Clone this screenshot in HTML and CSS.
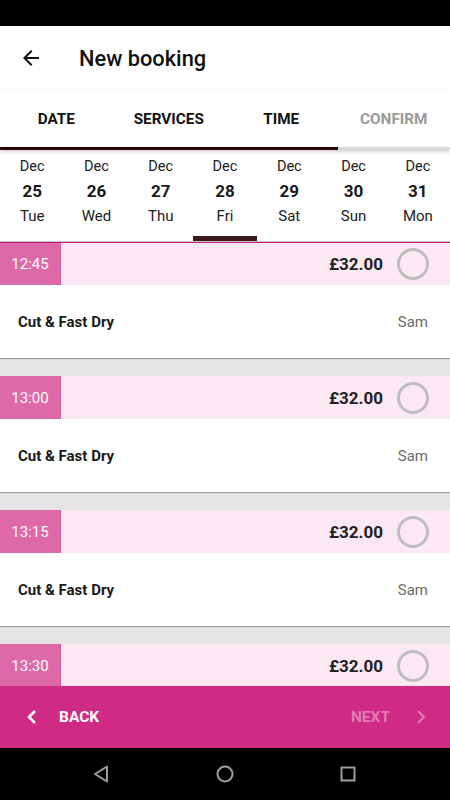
FILE: index.html
```html
<!DOCTYPE html>
<html lang="en">
<head>
    <meta charset="UTF-8">
    <meta name="viewport" content="width=device-width, initial-scale=1.0">
    <title>New booking</title>
    <link rel="stylesheet" href="styles.css">
</head>
<body>
    <div class="phone">
        <div class="status-bar"></div>

        <header class="app-bar">
            <svg class="back-icon" width="24" height="24" viewBox="0 0 24 24"><path d="M20 11H7.83l5.59-5.59L12 4l-8 8 8 8 1.41-1.41L7.83 13H20v-2z" fill="#111"/></svg>
            <h1>New booking</h1>
        </header>

        <nav class="steps">
            <div class="step">DATE</div>
            <div class="step">SERVICES</div>
            <div class="step">TIME</div>
            <div class="step step-off">CONFIRM</div>
            <div class="progress"><div class="progress-fill"></div></div>
        </nav>

        <div class="days">
            <div class="day"><span>Dec</span><strong>25</strong><span>Tue</span></div>
            <div class="day"><span>Dec</span><strong>26</strong><span>Wed</span></div>
            <div class="day"><span>Dec</span><strong>27</strong><span>Thu</span></div>
            <div class="day day-on"><span>Dec</span><strong>28</strong><span>Fri</span></div>
            <div class="day"><span>Dec</span><strong>29</strong><span>Sat</span></div>
            <div class="day"><span>Dec</span><strong>30</strong><span>Sun</span></div>
            <div class="day"><span>Dec</span><strong>31</strong><span>Mon</span></div>
        </div>

        <main class="slots">
            <div class="slot slot-first">
                <div class="slot-head">
                    <div class="slot-time">12:45</div>
                    <div class="slot-price">£32.00</div>
                    <div class="radio"></div>
                </div>
                <div class="slot-body"><strong>Cut &amp; Fast Dry</strong><span>Sam</span></div>
            </div>
            <div class="slot">
                <div class="slot-head">
                    <div class="slot-time">13:00</div>
                    <div class="slot-price">£32.00</div>
                    <div class="radio"></div>
                </div>
                <div class="slot-body"><strong>Cut &amp; Fast Dry</strong><span>Sam</span></div>
            </div>
            <div class="slot">
                <div class="slot-head">
                    <div class="slot-time">13:15</div>
                    <div class="slot-price">£32.00</div>
                    <div class="radio"></div>
                </div>
                <div class="slot-body"><strong>Cut &amp; Fast Dry</strong><span>Sam</span></div>
            </div>
            <div class="slot">
                <div class="slot-head">
                    <div class="slot-time">13:30</div>
                    <div class="slot-price">£32.00</div>
                    <div class="radio"></div>
                </div>
                <div class="slot-body"><strong>Cut &amp; Fast Dry</strong><span>Sam</span></div>
            </div>
        </main>

        <footer class="actions">
            <div class="action">
                <svg width="12" height="16" viewBox="0 0 12 16"><path d="M9 2L3 8l6 6" fill="none" stroke="#fff" stroke-width="2.6"/></svg>
                <span class="action-label">BACK</span>
            </div>
            <div class="action action-off">
                <span class="action-label">NEXT</span>
                <svg width="12" height="16" viewBox="0 0 12 16"><path d="M3 2l6 6-6 6" fill="none" stroke="#fff" stroke-width="2"/></svg>
            </div>
        </footer>

        <div class="nav-bar">
            <svg width="22" height="22" viewBox="0 0 22 22"><path d="M16 3.5v15L4 11z" fill="none" stroke="#9e9e9e" stroke-width="2" stroke-linejoin="round"/></svg>
            <svg width="22" height="22" viewBox="0 0 22 22"><circle cx="11" cy="11" r="7.5" fill="none" stroke="#9e9e9e" stroke-width="2"/></svg>
            <svg width="22" height="22" viewBox="0 0 22 22"><rect x="4.5" y="4.5" width="13" height="13" fill="none" stroke="#9e9e9e" stroke-width="2"/></svg>
        </div>
    </div>
</body>
</html>
```

FILE: styles.css
```css
*{box-sizing:border-box;margin:0;padding:0}
body{font-family:Roboto,"Liberation Sans",sans-serif;color:#1a1a1a;background:#000}
.phone{width:450px;height:800px;display:flex;flex-direction:column;overflow:hidden;background:#fff}
.status-bar{height:26px;background:#000;flex-shrink:0}
.app-bar{height:64px;display:flex;align-items:center;padding-left:19px;flex-shrink:0}
.back-icon{margin-right:36px}
.app-bar h1{font-size:21.8px;font-weight:500;color:#111}
.steps{position:relative;height:60px;display:grid;grid-template-columns:repeat(4,1fr);align-items:center;flex-shrink:0;box-shadow:0 2px 4px rgba(0,0,0,0.18);z-index:2;padding-bottom:2px}
.step{text-align:center;font-size:15.3px;font-weight:700;color:#111}
.step-off{color:#9a9a9a}
.progress{position:absolute;left:0;right:0;bottom:0;height:3px;background:#d9d9d9}
.progress-fill{width:75%;height:100%;background:#2a0808}
.days{height:92px;display:grid;grid-template-columns:repeat(7,1fr);border-bottom:1px solid #c8c8c8;flex-shrink:0}
.day{display:flex;flex-direction:column;align-items:center;padding-top:8px;font-size:14.5px;color:#222;border-bottom:5px solid transparent}
.day span{line-height:18px}
.day strong{font-size:17px;line-height:30px;margin:0 0 1px;color:#1a1a1a}
.day span:last-child{font-size:15px}
.day-on{border-bottom-color:#3c1a1a}
.slots{flex:1;overflow:hidden;background:#e5e5e5}
.slot{background:#fff;margin-bottom:18px;box-shadow:0 1px 1px rgba(0,0,0,0.3)}
.slot-first .slot-head{border-top:1px solid #c2187a}
.slot-head{height:43px;display:flex;align-items:center;background:#fbe8f2}
.slot-time{width:61px;height:100%;background:#de69a9;color:#fff;font-size:15px;display:flex;align-items:center;justify-content:center;border-right:1px solid #d65a9e}
.slot-price{margin-left:auto;font-size:17px;font-weight:700;color:#222}
.radio{width:32px;height:32px;border:3px solid #bdbdbd;border-radius:50%;margin:0 21px 0 14px}
.slot-body{height:73px;display:flex;align-items:center;justify-content:space-between;padding:0 22px 0 18px;font-size:15px}
.slot-body strong{font-weight:700;color:#1a1a1a}
.slot-body span{color:#6b6b6b}
.actions{height:62px;background:#cf2a84;display:flex;align-items:center;justify-content:space-between;padding:0 23px 0 26px;flex-shrink:0}
.action{display:flex;align-items:center;gap:21px;color:#fff;font-size:15.5px;font-weight:700}
.action-label{line-height:24px}
.action-off{color:rgba(255,255,255,0.4);gap:25px}
.action-off svg{opacity:0.4}
.nav-bar{height:52px;background:#000;display:flex;align-items:center;justify-content:space-around;padding:0 40px;flex-shrink:0}
```
